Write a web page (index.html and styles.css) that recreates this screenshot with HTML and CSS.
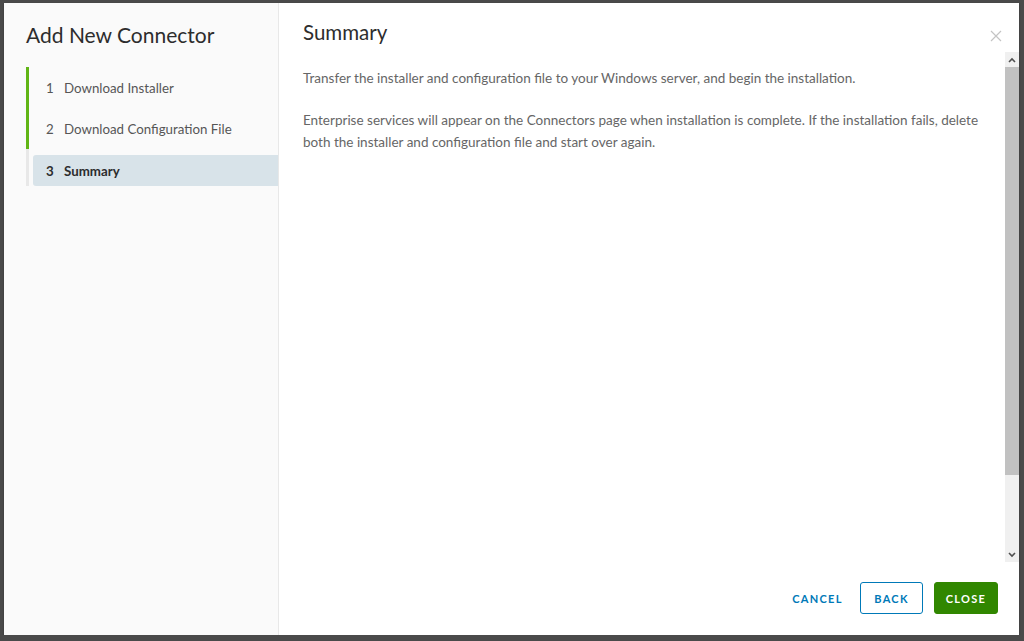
FILE: index.html
```html
<!DOCTYPE html>
<html lang="en">
<head>
    <meta charset="UTF-8">
    <title>Add New Connector</title>
    <link rel="stylesheet" href="styles.css">
</head>
<body>
    <div class="modal">
        <!-- steps -->
        <div class="sidebar">
            <div class="sidebar-title">Add New Connector</div>
            <ul class="steps">
                <li class="step done"><span class="num">1</span>Download Installer</li>
                <li class="step done"><span class="num">2</span>Download Configuration File</li>
                <li class="step active"><span class="num">3</span>Summary</li>
            </ul>
        </div>

        <div class="main">
            <div class="main-header">
                <div class="page-title">Summary</div>
                <svg class="close-x" width="12" height="12" viewBox="0 0 12 12">
                    <path d="M1 1 L11 11 M11 1 L1 11" stroke="#c4c4c4" stroke-width="1.2" fill="none"/>
                </svg>
            </div>

            <div class="main-body">
                <div class="content">
                    <p>Transfer the installer and configuration file to your Windows server, and begin the installation.</p>
                    <p>Enterprise services will appear on the Connectors page when installation is complete. If the installation fails, delete both the installer and configuration file and start over again.</p>
                </div>
                <div class="scrollbar">
                    <div class="sb-btn">
                        <svg width="8" height="6" viewBox="0 0 8 6"><path d="M1 5 L4 2 L7 5" stroke="#505050" stroke-width="1.6" fill="none"/></svg>
                    </div>
                    <div class="sb-thumb"></div>
                    <div class="sb-track"></div>
                    <div class="sb-btn">
                        <svg width="8" height="6" viewBox="0 0 8 6"><path d="M1 1 L4 4 L7 1" stroke="#505050" stroke-width="1.6" fill="none"/></svg>
                    </div>
                </div>
            </div>

            <div class="footer">
                <button class="btn btn-link">Cancel</button>
                <button class="btn btn-outline">Back</button>
                <button class="btn btn-primary">Close</button>
            </div>
        </div>
    </div>
</body>
</html>
```

FILE: styles.css
```css
body {
    margin: 0;
    background-color: #4a4a4a;
    font-family: 'Lato', 'Open Sans', sans-serif;
}
.modal {
    display: flex;
    margin: 3px 5px 0 4px;
    height: 632px;
    background: #fff;
    box-shadow: 0 1px 2px rgba(0, 0, 0, 0.3);
}
.sidebar {
    width: 275px;
    background-color: #fafafa;
    border-right: 1px solid #e8e8e8;
    padding: 17px 0 0 22px;
    box-sizing: border-box;
}
.sidebar-title {
    font-size: 21px;
    color: #2d2d2d;
    line-height: 30px;
    margin-bottom: 17px;
}
.steps {
    list-style: none;
    margin: 0;
    padding: 0;
    border-left: 3px solid #e8e8e8;
}
.step {
    display: flex;
    align-items: center;
    height: 41px;
    font-size: 13.3px;
    color: #565656;
    padding-left: 17px;
    margin-left: -3px;
    border-left: 3px solid transparent;
}
.step.done {
    border-left-color: #60b515;
}
.step .num {
    width: 18px;
}
.step.active {
    height: 31px;
    margin: 6px 0 5px 4px;
    padding-left: 13px;
    border-left: none;
    background-color: #d8e3e9;
    border-radius: 3px 0 0 3px;
    color: #2d2d2d;
    font-weight: bold;
}
.main {
    flex: 1;
    display: flex;
    flex-direction: column;
}
.main-header {
    height: 49px;
    display: flex;
    justify-content: space-between;
    padding: 0 17px 0 24px;
}
.page-title {
    font-size: 20.5px;
    color: #2d2d2d;
    line-height: 30px;
    margin-top: 14px;
}
.close-x {
    margin-top: 27px;
}
.main-body {
    display: flex;
    height: 510px;
}
.content {
    flex: 1;
    padding: 15px 24px 0 24px;
}
.content p {
    margin: 0 0 20px;
    font-size: 13.5px;
    line-height: 22px;
    color: #666;
}
.scrollbar {
    width: 14px;
    display: flex;
    flex-direction: column;
    background-color: #f0f0f0;
}
.sb-btn {
    height: 15px;
    display: flex;
    align-items: center;
    justify-content: center;
}
.sb-thumb {
    height: 408px;
    background-color: #c1c1c1;
}
.sb-track {
    flex: 1;
}
.footer {
    flex: 1;
    display: flex;
    justify-content: flex-end;
    align-items: flex-start;
    padding: 20px 21px 0 0;
}
.btn {
    height: 32px;
    padding: 0;
    border-radius: 3px;
    font-family: inherit;
    font-size: 11px;
    font-weight: bold;
    letter-spacing: 1.3px;
    text-transform: uppercase;
    text-align: center;
    cursor: pointer;
    box-sizing: border-box;
}
.btn-link {
    width: 73px;
    border: none;
    background: none;
    color: #0079b8;
}
.btn-outline {
    width: 63px;
    margin-left: 6px;
    border: 1px solid #0079b8;
    background: #fff;
    color: #0079b8;
}
.btn-primary {
    width: 64px;
    margin-left: 11px;
    border: 1px solid #318700;
    background-color: #318700;
    color: #fff;
}
```
